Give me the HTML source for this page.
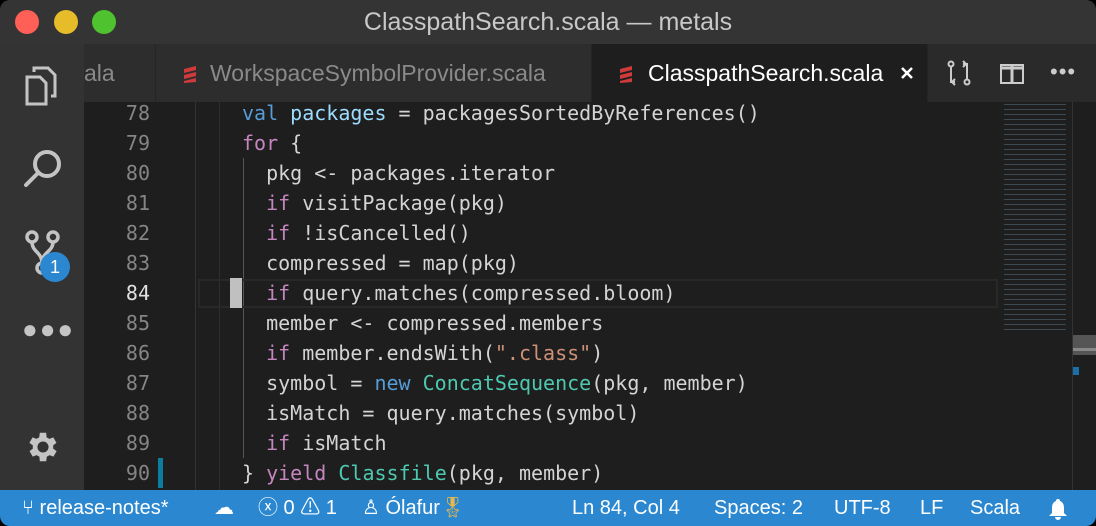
<!DOCTYPE html>
<html><head><meta charset="utf-8"><style>
*{margin:0;padding:0;box-sizing:border-box}
body{width:1096px;height:526px;background:#000;overflow:hidden;font-family:"Liberation Sans",sans-serif}
.win{position:absolute;left:0;top:0;width:1096px;height:526px;border-radius:10px;overflow:hidden;background:#1e1e1e}
.title{position:absolute;left:0;top:0;width:1096px;height:44px;background:#343434;color:#c8c8c8;font-size:25px;text-align:center;line-height:44px}
.dot{position:absolute;top:10px;width:24px;height:24px;border-radius:50%}
.tabs{position:absolute;left:84px;top:44px;width:1012px;height:58px;background:#2a2a2a}
.tab{position:absolute;top:0;height:58px;line-height:58px;font-size:23px;color:#8a8a8a;background:#2d2d2d;border-right:1px solid #252525;white-space:nowrap;overflow:hidden}
.act{position:absolute;left:0;top:44px;width:84px;height:446px;background:#333}
.code{position:absolute;top:98px;left:0;font-family:"DejaVu Sans Mono","Liberation Mono",monospace;font-size:20px;color:#d4d4d4;white-space:pre}
.ln{position:absolute;left:84px;width:66px;text-align:right;color:#858585;font-family:"DejaVu Sans Mono",monospace;font-size:20px}
.l{position:absolute;left:242px;height:30px;line-height:30px}
.k{color:#c586c0}.b{color:#569cd6}.v{color:#9cdcfe}.t{color:#4ec9b0}.s{color:#ce9178}
.status{position:absolute;left:0;top:490px;width:1096px;height:36px;background:#2a87d0;color:#fff;font-size:20px;line-height:36px}
.status span{position:absolute;top:0}
</style></head><body><div class="win">
<div class="title">ClasspathSearch.scala — metals
<div class="dot" style="left:15px;background:#fe5f57"></div>
<div class="dot" style="left:54px;background:#e6bd29"></div>
<div class="dot" style="left:92px;background:#4fc22f"></div>
</div>
<div class="tabs">
<div class="tab" style="left:0;width:72px;padding-left:0">ala</div>
<div class="tab" style="left:72px;width:436px;padding-left:54px">WorkspaceSymbolProvider.scala</div>
<svg style="position:absolute;left:99px;top:21px" width="14" height="18" viewBox="0 0 14 18"><path d="M1 4L13 1V5L1 8ZM1 10L13 7V11L1 14ZM1 16L13 13V17L1 18Z" fill="#d03a3a"/></svg>
<div class="tab" style="left:508px;width:336px;background:#1e1e1e;color:#fff;padding-left:56px">ClasspathSearch.scala</div>
<svg style="position:absolute;left:535px;top:21px" width="14" height="18" viewBox="0 0 14 18"><path d="M1 4L13 1V5L1 8ZM1 10L13 7V11L1 14ZM1 16L13 13V17L1 18Z" fill="#d03a3a"/></svg>
<svg style="position:absolute;left:816px;top:22px" width="14" height="14"><path d="M2 2L12 12M12 2L2 12" stroke="#fff" stroke-width="2.5"/></svg>
<svg style="position:absolute;left:862px;top:16px" width="26" height="26" fill="none" stroke="#ccc" stroke-width="2"><circle cx="5" cy="4" r="2.5"/><circle cx="21" cy="22" r="2.5"/><path d="M5 7V22H9M21 19V4H17M9 19l-3 3 3 3M17 1l3 3-3 3"/></svg>
<svg style="position:absolute;left:916px;top:20px" width="24" height="20" fill="none" stroke="#ccc" stroke-width="2"><rect x="1" y="1" width="22" height="18"/><path d="M12 1V19M1 4H23" stroke-width="3"/></svg>
<div style="position:absolute;left:966px;top:15px;color:#ccc;font-size:22px;letter-spacing:1px">•••</div>
</div>
<div class="act">
<svg style="position:absolute;left:24px;top:22px" width="34" height="40" fill="none" stroke="#c4c4c4" stroke-width="3"><path d="M10 6V2h14l7 7v21h-4"/><path d="M3 11h13l6 6v21H3z"/></svg>
<svg style="position:absolute;left:22px;top:104px" width="42" height="42" fill="none" stroke="#c4c4c4" stroke-width="4"><circle cx="25" cy="16" r="12"/><path d="M16 25L4 37" stroke-linecap="round"/></svg>
<svg style="position:absolute;left:24px;top:186px" width="38" height="46" fill="none" stroke="#c4c4c4" stroke-width="3.5"><circle cx="8" cy="7" r="5"/><circle cx="29" cy="7" r="5"/><circle cx="18" cy="38" r="5"/><path d="M8 12C8 22 18 22 18 33M29 12C29 22 18 22 18 33"/></svg>
<div style="position:absolute;left:40px;top:208px;width:30px;height:30px;border-radius:50%;background:#2a87d0;color:#fff;font-size:18px;text-align:center;line-height:30px">1</div>
<div style="position:absolute;left:22px;top:270px;color:#c4c4c4;font-size:26px;letter-spacing:2px">●●●</div>
<svg style="position:absolute;left:24px;top:384px" width="38" height="38" viewBox="0 0 24 24"><path fill="#c4c4c4" d="M19.4 13a7.5 7.5 0 000-2l2.1-1.6-2-3.5-2.5 1a7 7 0 00-1.7-1L15 3h-4l-.4 2.9a7 7 0 00-1.7 1l-2.5-1-2 3.5L6.6 11a7.5 7.5 0 000 2l-2.1 1.6 2 3.5 2.5-1a7 7 0 001.7 1L11 21h4l.4-2.9a7 7 0 001.7-1l2.5 1 2-3.5zM13 15.5a3.5 3.5 0 110-7 3.5 3.5 0 010 7z" transform="translate(-1 0)"/></svg>
</div>
<div style="position:absolute;left:195px;top:102px;width:1px;height:388px;background:#333"></div>
<div style="position:absolute;left:219px;top:102px;width:1px;height:388px;background:#2e2e2e"></div>
<div style="position:absolute;left:243px;top:158px;width:1px;height:300px;background:#555"></div>
<div style="position:absolute;left:198px;top:279px;width:800px;height:29px;border:2px solid #282828"></div>
<div style="position:absolute;left:230px;top:278px;width:12px;height:30px;background:#c0c0c0"></div>
<div style="position:absolute;left:158px;top:458px;width:5px;height:30px;background:#0c7d9d"></div>
<div style="position:absolute;left:1072px;top:335px;width:24px;height:20px;background:#555"></div>
<div style="position:absolute;left:1072px;top:348px;width:24px;height:3px;background:#888"></div>
<div style="position:absolute;left:1073px;top:367px;width:6px;height:8px;background:#1b6fa8"></div>
<div style="position:absolute;left:1072px;top:102px;width:1px;height:388px;background:#333"></div>
<div class="code">
<div class="ln" style="top:0;line-height:30px">78</div><div class="ln" style="top:30px;line-height:30px">79</div><div class="ln" style="top:60px;line-height:30px">80</div><div class="ln" style="top:90px;line-height:30px">81</div><div class="ln" style="top:120px;line-height:30px">82</div><div class="ln" style="top:150px;line-height:30px">83</div><div class="ln" style="top:180px;line-height:30px;color:#e0e0e0">84</div><div class="ln" style="top:210px;line-height:30px">85</div><div class="ln" style="top:240px;line-height:30px">86</div><div class="ln" style="top:270px;line-height:30px">87</div><div class="ln" style="top:300px;line-height:30px">88</div><div class="ln" style="top:330px;line-height:30px">89</div><div class="ln" style="top:360px;line-height:30px">90</div>
<div class="l" style="top:0"><span class="b">val</span> <span class="v">packages</span> = packagesSortedByReferences()</div>
<div class="l" style="top:30px"><span class="k">for</span> {</div>
<div class="l" style="top:60px">  pkg &lt;- packages.iterator</div>
<div class="l" style="top:90px">  <span class="k">if</span> visitPackage(pkg)</div>
<div class="l" style="top:120px">  <span class="k">if</span> !isCancelled()</div>
<div class="l" style="top:150px">  compressed = map(pkg)</div>
<div class="l" style="top:180px">  <span class="k">if</span> query.matches(compressed.bloom)</div>
<div class="l" style="top:210px">  member &lt;- compressed.members</div>
<div class="l" style="top:240px">  <span class="k">if</span> member.endsWith(<span class="s">".class"</span>)</div>
<div class="l" style="top:270px">  symbol = <span class="b">new</span> <span class="t">ConcatSequence</span>(pkg, member)</div>
<div class="l" style="top:300px">  isMatch = query.matches(symbol)</div>
<div class="l" style="top:330px">  <span class="k">if</span> isMatch</div>
<div class="l" style="top:360px">} <span class="k">yield</span> <span class="t">Classfile</span>(pkg, member)</div>
</div>
<div style="position:absolute;left:1004px;top:102px;width:62px;height:230px;opacity:.4;background:repeating-linear-gradient(#1e1e1e 0 2px,#6a8a9a 2px 3px,#1e1e1e 3px 5px)"></div>
<div class="status">
<span style="left:22px">⑂ release-notes*</span>
<span style="left:214px">☁</span>
<span style="left:258px">ⓧ 0 ⚠ 1</span>
<span style="left:362px">♙ Ólafur <span style="color:#e8b84a">🎖</span></span>
<span style="left:572px">Ln 84, Col 4</span>
<span style="left:714px">Spaces: 2</span>
<span style="left:834px">UTF-8</span>
<span style="left:920px">LF</span>
<span style="left:970px">Scala</span>
<svg style="position:absolute;left:1047px;top:8px" width="22" height="22" viewBox="0 0 22 22"><path fill="#fff" d="M11 1a2 2 0 012 2c3 1 4 4 4 7v5l3 3H2l3-3v-5c0-3 1-6 4-7a2 2 0 012-2zM8 19h6a3 3 0 01-6 0z"/></svg>
</div>
</div></body></html>
